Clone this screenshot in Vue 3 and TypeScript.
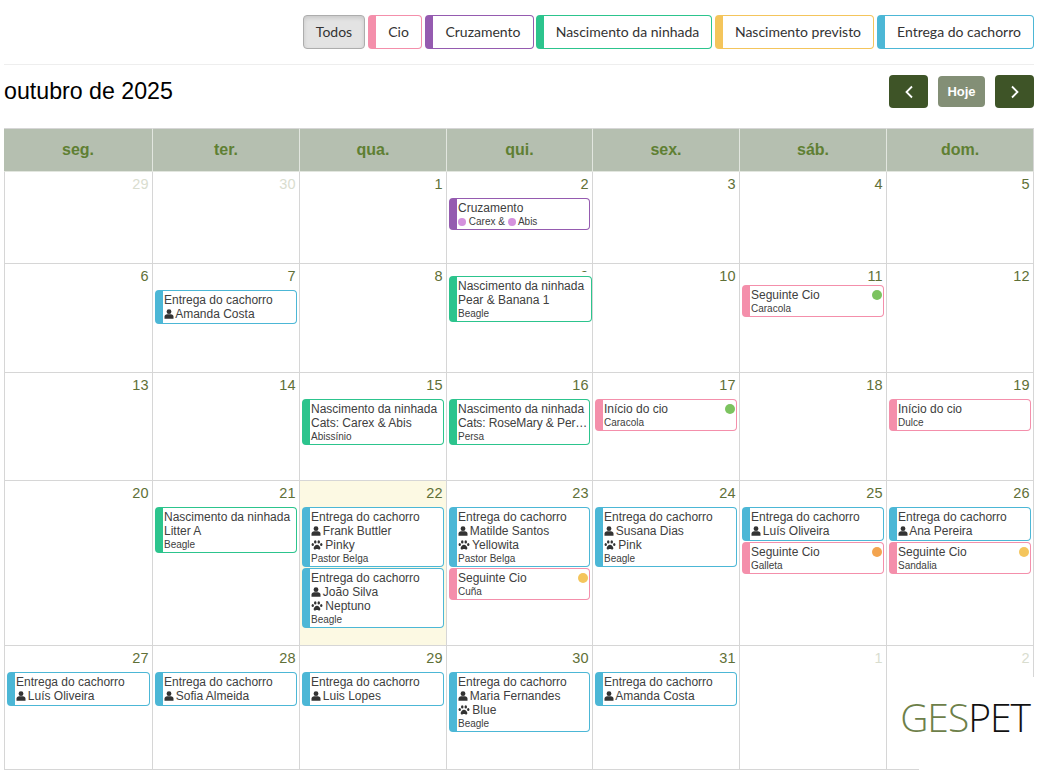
<template>
  <div class="page">
    <div class="filters">
      <button v-for="f in filters" :key="f.label" class="filter" :class="f.kind">{{ f.label }}</button>
    </div>

    <div class="toolbar">
      <h2>outubro de 2025</h2>
      <div class="nav">
        <button class="nav-btn" aria-label="anterior">
          <svg viewBox="0 0 10 14" width="10" height="14"><path d="M8 1.500 2.500 7 8 12.500" /></svg>
        </button>
        <button class="today-btn">Hoje</button>
        <button class="nav-btn" aria-label="seguinte">
          <svg viewBox="0 0 10 14" width="10" height="14"><path d="M2 1.500 7.500 7 2 12.500" /></svg>
        </button>
      </div>
    </div>

    <div class="calendar">
      <div v-for="d in weekdays" :key="d" class="head">{{ d }}</div>
      <div
        v-for="c in cells"
        :key="c.id"
        class="cell"
        :class="{ 'is-today': c.today }"
      >
        <div class="num" :class="{ muted: c.muted }">{{ c.day }}</div>
        <div class="events" :class="{ raised: c.day === 9 && !c.muted, lifted: c.day === 11 }">
          <div v-for="(e, i) in c.events" :key="i" class="event" :class="e.kind">
            <div class="title">{{ e.title }}</div>
            <span v-if="e.dot" class="dot" :style="{ background: e.dot }"></span>
            <div v-if="e.parents" class="small">
              <span class="pdot"></span> {{ e.parents[0] }} &amp; <span class="pdot"></span> {{ e.parents[1] }}
            </div>
            <div v-if="e.line" class="line" :class="{ tight: e.tight }">{{ e.line }}</div>
            <div v-if="e.owner" class="line">
              <svg class="ico" viewBox="0 0 12 12"><circle cx="6" cy="3.200" r="2.900" /><path d="M.6 11.800V9.300C.6 7.400 2 6.200 3.800 6.200h4.400c1.800 0 3.200 1.200 3.200 3.100v2.500z" /></svg>
              {{ e.owner }}
            </div>
            <div v-if="e.pet" class="line">
              <svg class="ico paw" viewBox="0 0 14 12"><ellipse cx="1.900" cy="5.300" rx="1.400" ry="1.800" /><ellipse cx="4.900" cy="2.300" rx="1.500" ry="2" /><ellipse cx="9.100" cy="2.300" rx="1.500" ry="2" /><ellipse cx="12.100" cy="5.300" rx="1.400" ry="1.800" /><path d="M7 5.600c-2 0-4 2.300-4 4.200 0 1.200 1 1.700 2 1.500.8-.2 1.300-.4 2-.4s1.200.2 2 .4c1 .2 2-.3 2-1.500 0-1.900-2-4.200-4-4.200z" /></svg>
              {{ e.pet }}
            </div>
            <div v-if="e.sub" class="small sub">{{ e.sub }}</div>
          </div>
        </div>
      </div>
    </div>

    <div class="logo"><span class="ges">GES</span><span class="pet">PET</span></div>
  </div>
</template>

<script setup lang="ts">
interface CalEvent {
  kind: string
  title: string
  line?: string
  tight?: boolean
  owner?: string
  pet?: string
  sub?: string
  dot?: string
  parents?: [string, string]
}

interface Cell {
  id: string
  day: number
  muted?: boolean
  today?: boolean
  events: CalEvent[]
}

const filters = [
  { label: 'Todos', kind: 'all' },
  { label: 'Cio', kind: 'heat' },
  { label: 'Cruzamento', kind: 'mating' },
  { label: 'Nascimento da ninhada', kind: 'birth' },
  { label: 'Nascimento previsto', kind: 'due' },
  { label: 'Entrega do cachorro', kind: 'delivery' },
]

const weekdays = ['seg.', 'ter.', 'qua.', 'qui.', 'sex.', 'sáb.', 'dom.']

const GREEN = '#7cc35f'
const YELLOW = '#f4c55c'
const ORANGE = '#f3a44f'

const delivery = (owner: string, pet?: string, sub?: string): CalEvent => ({
  kind: 'delivery',
  title: 'Entrega do cachorro',
  owner,
  pet,
  sub,
})
const birth = (line: string, sub: string, tight = false): CalEvent => ({
  kind: 'birth',
  title: 'Nascimento da ninhada',
  line,
  sub,
  tight,
})
const heat = (title: string, sub: string, dot?: string): CalEvent => ({ kind: 'heat', title, sub, dot })

// eventos por dia de outubro
const october: Record<number, CalEvent[]> = {
  2: [{ kind: 'mating', title: 'Cruzamento', parents: ['Carex', 'Abis'] }],
  7: [delivery('Amanda Costa')],
  9: [birth('Pear & Banana 1', 'Beagle')],
  11: [heat('Seguinte Cio', 'Caracola', GREEN)],
  15: [birth('Cats: Carex & Abis', 'Abissínio')],
  16: [birth('Cats: RoseMary & Per…', 'Persa', true)],
  17: [heat('Início do cio', 'Caracola', GREEN)],
  19: [heat('Início do cio', 'Dulce')],
  21: [birth('Litter A', 'Beagle')],
  22: [delivery('Frank Buttler', 'Pinky', 'Pastor Belga'), delivery('João Silva', 'Neptuno', 'Beagle')],
  23: [delivery('Matilde Santos', 'Yellowita', 'Pastor Belga'), heat('Seguinte Cio', 'Cuña', YELLOW)],
  24: [delivery('Susana Dias', 'Pink', 'Beagle')],
  25: [delivery('Luís Oliveira'), heat('Seguinte Cio', 'Galleta', ORANGE)],
  26: [delivery('Ana Pereira'), heat('Seguinte Cio', 'Sandalia', YELLOW)],
  27: [delivery('Luís Oliveira')],
  28: [delivery('Sofia Almeida')],
  29: [delivery('Luis Lopes')],
  30: [delivery('Maria Fernandes', 'Blue', 'Beagle')],
  31: [delivery('Amanda Costa')],
}

const cells: Cell[] = [
  { id: 's29', day: 29, muted: true, events: [] },
  { id: 's30', day: 30, muted: true, events: [] },
]
for (let day = 1; day <= 31; day++) {
  cells.push({ id: `o${day}`, day, today: day === 22, events: october[day] ?? [] })
}
cells.push({ id: 'n1', day: 1, muted: true, events: [] }, { id: 'n2', day: 2, muted: true, events: [] })
</script>

<style>
html,
body {
  margin: 0;
  background: #fff;
}
</style>

<style scoped>
.page {
  position: relative;
  width: 1040px;
  height: 777px;
  overflow: hidden;
  font-family: "Liberation Sans", Arial, sans-serif;
  color: #333;
}

.filters {
  display: flex;
  justify-content: flex-end;
  gap: 3px;
  height: 65px;
  box-sizing: border-box;
  margin-left: 4px;
  margin-right: 6px;
  padding-top: 15px;
  border-bottom: 1px solid #eee;
}

.filter {
  box-sizing: border-box;
  height: 34px;
  padding: 0 0 2px;
  font-family: Lato, sans-serif;
  font-size: 14px;
  color: #333;
  background: #fff;
  border: 1px solid;
  border-left-width: 8px;
  border-radius: 4px;
}
.filter.all {
  width: 62px;
  background: #e3e3e3;
  border: 1px solid #adadad;
  box-shadow: inset 0 2px 4px rgba(0, 0, 0, 0.12);
}
.filter.heat { width: 54px; border-color: #f48fab; }
.filter.mating { width: 109px; border-color: #955bb0; }
.filter.birth { width: 176px; margin-left: -1px; border-color: #2cc48d; }
.filter.due { width: 159px; border-color: #f4c55c; }
.filter.delivery { width: 157px; border-color: #4cb7d6; }

.toolbar {
  display: flex;
  justify-content: space-between;
  align-items: center;
  height: 52px;
  margin: 0 6px 0 4px;
}
.toolbar h2 {
  margin: 0;
  font-size: 23.200px;
  font-weight: 400;
  color: #000;
}

.nav {
  display: flex;
  align-items: center;
  gap: 10px;
  margin-top: 1px;
}
.nav-btn {
  display: flex;
  align-items: center;
  justify-content: center;
  width: 39px;
  height: 33px;
  padding: 0;
  background: #3e5427;
  border: 0;
  border-radius: 4px;
}
.nav-btn svg {
  fill: none;
  stroke: #fff;
  stroke-width: 1.800;
}
.today-btn {
  width: 47px;
  height: 31px;
  padding: 0;
  font-family: "Liberation Sans", Arial, sans-serif;
  font-size: 13px;
  font-weight: 700;
  color: #fff;
  background: #838f76;
  border: 0;
  border-radius: 4px;
}

.calendar {
  display: grid;
  grid-template-columns: 149px 147px 147px 146px 147px 147px 147px;
  grid-template-rows: 44px 92px 109px 108px 165px 124px;
  margin: 11px 6px 0 4px;
  width: 1030px;
}

.head {
  display: flex;
  align-items: center;
  justify-content: center;
  font-size: 16px;
  font-weight: 700;
  color: #5f7f33;
  background: #b5bfb0;
  border-top: 1px solid #d6d6d6;
  border-right: 1px solid #e2e6df;
  border-bottom: 1px solid #e2e6df;
  box-sizing: border-box;
}
.head:nth-child(7) {
  border-right-color: #d6d6d6;
}

.cell {
  min-width: 0;
  box-sizing: border-box;
  border-right: 1px solid #d6d6d6;
  border-bottom: 1px solid #d6d6d6;
}
.cell:nth-child(7n + 1) {
  border-left: 1px solid #d6d6d6;
}
.cell.is-today {
  background: #fcf9e3;
}

.num {
  height: 19px;
  padding: 3px 3.500px 0 0;
  font-size: 14.500px;
  line-height: 18px;
  text-align: right;
  color: #5f7037;
}
.num.muted {
  color: #d9ddcf;
}

.events {
  position: relative;
  display: flex;
  flex-direction: column;
  gap: 1px;
  padding: 0 2px;
  margin-top: 4px;
}
/* no dia 9 o evento sobe por cima do número */
.events.raised {
  margin-top: -10px;
  margin-right: -2px;
}
.events.raised .event {
  box-shadow: 0 -4px 0 #fff;
}
.events.lifted {
  margin-top: -1px;
}

.event {
  position: relative;
  min-width: 0;
  padding: 2px 0 2px 1px;
  font-size: 12px;
  line-height: 14px;
  color: #404040;
  background: #fff;
  border: 1px solid;
  border-left-width: 8px;
  border-radius: 4px;
}
.event.heat { border-color: #f48fab; }
.event.mating { border-color: #955bb0; }
.event.birth { border-color: #2cc48d; }
.event.delivery { border-color: #4cb7d6; }

.title,
.line {
  white-space: nowrap;
  overflow: hidden;
}
.line.tight {
  letter-spacing: -0.100px;
}

.small {
  margin-bottom: -2px;
  font-size: 10px;
  line-height: 14px;
  white-space: nowrap;
}

.ico {
  width: 10px;
  height: 10px;
  margin-right: -1.500px;
  fill: #333;
  vertical-align: -1px;
}
.ico.paw {
  width: 12px;
  height: 10px;
  margin-right: -1px;
}

.dot {
  position: absolute;
  top: 4px;
  right: 1px;
  width: 10px;
  height: 10px;
  border-radius: 50%;
}
.pdot {
  display: inline-block;
  width: 8px;
  height: 8px;
  vertical-align: -1px;
  background: #d491dd;
  border-radius: 50%;
}

/* logótipo por cima do canto do calendário */
.logo {
  position: absolute;
  right: 0;
  bottom: 0;
  display: flex;
  justify-content: flex-end;
  width: 121px;
  height: 100px;
  box-sizing: border-box;
  padding: 15px 10px 0 0;
  font-family: "Open Sans", sans-serif;
  font-size: 39px;
  font-weight: 300;
  line-height: 50px;
  letter-spacing: -1px;
  white-space: nowrap;
  background: #fff;
}
.ges {
  color: #6d8049;
}
.pet {
  color: #111;
}
</style>
